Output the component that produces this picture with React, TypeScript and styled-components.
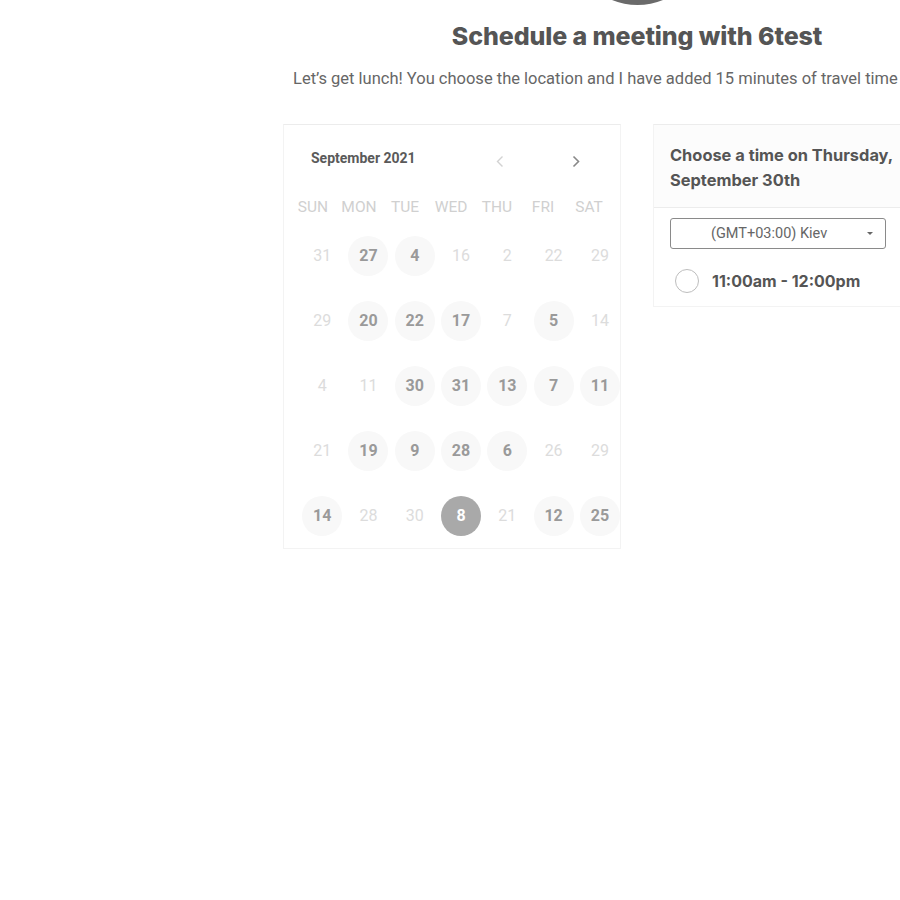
import React from "react";
import styled, { createGlobalStyle } from "styled-components";

const GlobalStyle = createGlobalStyle`
  html, body { margin: 0; padding: 0; background: #ffffff; overflow: hidden; }
  body { font-family: Roboto, "Liberation Sans", Arial, sans-serif; color: #555; }
`;

const Page = styled.div`
  width: 1274px;
  display: flex;
  flex-direction: column;
  align-items: center;
`;

const Avatar = styled.div`
  width: 135px;
  height: 135px;
  border-radius: 50%;
  background: #6a6a6a;
  margin-top: -130px;
`;

const Title = styled.h1`
  margin: 16px 0 0;
  font-family: Inter, Roboto, sans-serif;
  font-weight: 800;
  font-size: 25px;
  line-height: 30px;
  color: #555;
  letter-spacing: -0.1px;
`;

const Subtitle = styled.p`
  margin: 18px 0 0;
  width: 688px;
  font-size: 16.5px;
  line-height: 20px;
  color: #666;
  white-space: nowrap;
`;

const Row = styled.div`
  display: flex;
  gap: 32px;
  margin-top: 35px;
  align-items: flex-start;
`;

const Card = styled.div`
  width: 338px;
  box-sizing: border-box;
  border: 1px solid #f3f3f3;
  border-top-color: #ececec;
  background: #fff;
`;

const CalHeader = styled.div`
  height: 66px;
  display: flex;
  align-items: center;
  padding: 0 0 0 27px;
`;

const Month = styled.div`
  font-size: 14px;
  font-weight: 700;
  color: #5a5a5a;
  width: 181px;
`;

const Arrow = styled.div<{ $dark?: boolean }>`
  width: 16px;
  height: 16px;
  margin-top: 6px;
  display: flex;
  align-items: center;
  justify-content: center;
  color: ${(p) => (p.$dark ? "#888" : "#d2d2d2")};
  margin-left: ${(p) => (p.$dark ? "60px" : "0")};
`;

const WeekRow = styled.div`
  display: grid;
  grid-template-columns: repeat(7, 46px);
  padding-left: 6px;
`;

const Grid = styled.div`
  display: grid;
  grid-template-columns: repeat(7, 46.3px);
  padding-left: 15px;
`;

const WeekDay = styled.div`
  height: 32px;
  display: flex;
  align-items: center;
  justify-content: center;
  font-size: 15.5px;
  color: #d0d0d0;
`;

const DayCell = styled.div`
  height: 65px;
  display: flex;
  align-items: center;
  justify-content: center;
`;

const Day = styled.div<{ $kind: "off" | "on" | "sel" }>`
  width: 40px;
  height: 40px;
  border-radius: 50%;
  display: flex;
  align-items: center;
  justify-content: center;
  font-size: 16px;
  font-weight: ${(p) => (p.$kind === "off" ? 400 : 700)};
  color: ${(p) => (p.$kind === "off" ? "#dcdcdc" : p.$kind === "sel" ? "#fff" : "#9a9a9a")};
  background: ${(p) => (p.$kind === "off" ? "transparent" : p.$kind === "sel" ? "#a9a9a9" : "#f8f8f8")};
`;

const Panel = styled(Card)`
  display: flex;
  flex-direction: column;
`;

const PanelHeader = styled.div`
  background: #fcfcfc;
  border-bottom: 1px solid #ececec;
  padding: 18px 16px 14px;
  font-family: Inter, Roboto, sans-serif;
  font-weight: 700;
  font-size: 16.4px;
  line-height: 25px;
  color: #555;
`;

const PanelBody = styled.div`
  padding: 10px 16px 13px;
  display: flex;
  flex-direction: column;
`;

const Select = styled.div`
  width: 216px;
  height: 31px;
  box-sizing: border-box;
  border: 1px solid #8a8a8a;
  border-radius: 3px;
  display: flex;
  align-items: center;
  position: relative;
  font-size: 14.5px;
  color: #666;
  padding-left: 40px;
`;

const Caret = styled.span`
  position: absolute;
  right: 12px;
  top: 13px;
  width: 0;
  height: 0;
  border-left: 3px solid transparent;
  border-right: 3px solid transparent;
  border-top: 3px solid #666;
`;

const Slot = styled.div`
  margin-top: 20px;
  display: flex;
  align-items: center;
  gap: 13px;
  padding-left: 5px;
  font-family: Inter, Roboto, sans-serif;
  font-weight: 700;
  font-size: 16px;
  color: #555;
`;

const Radio = styled.span`
  width: 24px;
  height: 24px;
  box-sizing: border-box;
  border-radius: 50%;
  border: 1.5px solid #bdbdbd;
`;

type K = "off" | "on" | "sel";
const weeks: [string, K][][] = [
  [["31", "off"], ["27", "on"], ["4", "on"], ["16", "off"], ["2", "off"], ["22", "off"], ["29", "off"]],
  [["29", "off"], ["20", "on"], ["22", "on"], ["17", "on"], ["7", "off"], ["5", "on"], ["14", "off"]],
  [["4", "off"], ["11", "off"], ["30", "on"], ["31", "on"], ["13", "on"], ["7", "on"], ["11", "on"]],
  [["21", "off"], ["19", "on"], ["9", "on"], ["28", "on"], ["6", "on"], ["26", "off"], ["29", "off"]],
  [["14", "on"], ["28", "off"], ["30", "off"], ["8", "sel"], ["21", "off"], ["12", "on"], ["25", "on"]],
];

const days = ["SUN", "MON", "TUE", "WED", "THU", "FRI", "SAT"];

export default function App() {
  return (
    <>
      <GlobalStyle />
      <Page>
        <Avatar />
        <Title>Schedule a meeting with 6test</Title>
        <Subtitle>Let’s get lunch! You choose the location and I have added 15 minutes of travel time</Subtitle>
        <Row>
          <Card>
            <CalHeader>
              <Month>September 2021</Month>
              <Arrow>
                <svg width="8" height="13" viewBox="0 0 8 13" fill="none">
                  <path d="M6.5 1.5L1.5 6.5L6.5 11.5" stroke="currentColor" strokeWidth="1.4" />
                </svg>
              </Arrow>
              <Arrow $dark>
                <svg width="8" height="13" viewBox="0 0 8 13" fill="none">
                  <path d="M1.5 1.5L6.5 6.5L1.5 11.5" stroke="currentColor" strokeWidth="1.6" />
                </svg>
              </Arrow>
            </CalHeader>
            <WeekRow>
              {days.map((d) => (
                <WeekDay key={d}>{d}</WeekDay>
              ))}
            </WeekRow>
            <Grid>
              {weeks.flat().map(([n, k], i) => (
                <DayCell key={i}>
                  <Day $kind={k}>{n}</Day>
                </DayCell>
              ))}
            </Grid>
          </Card>
          <Panel>
            <PanelHeader>
              Choose a time on Thursday,
              <br />
              September 30th
            </PanelHeader>
            <PanelBody>
              <Select>
                (GMT+03:00) Kiev
                <Caret />
              </Select>
              <Slot>
                <Radio />
                11:00am - 12:00pm
              </Slot>
            </PanelBody>
          </Panel>
        </Row>
      </Page>
    </>
  );
}
